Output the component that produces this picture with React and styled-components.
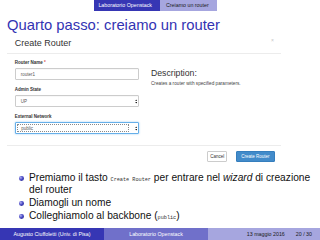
import styled, { createGlobalStyle } from 'styled-components';

const GlobalStyle = createGlobalStyle`
  html, body {
    margin: 0;
    padding: 0;
    background: #ffffff;
  }
  body {
    width: 320px;
    height: 240px;
    overflow: hidden;
    font-family: 'Liberation Sans', Arial, sans-serif;
  }
`;

const Slide = styled.div`
  display: flex;
  flex-direction: column;
  width: 320px;
  height: 240px;
  background: #ffffff;
  overflow: hidden;
`;

const HeadLine = styled.div`
  display: flex;
  height: 11px;
  font-size: 5.3px;
  line-height: 11px;
`;

const HeadHalf = styled.div`
  flex: 1;
  display: flex;
  justify-content: ${(p) => (p.$side === 'left' ? 'flex-end' : 'flex-start')};
`;

const HeadTab = styled.div`
  background: ${(p) => (p.$dark ? '#3636b4' : '#a6a6df')};
  color: ${(p) => (p.$dark ? '#ffffff' : '#1a1a1a')};
  padding: ${(p) => (p.$dark ? '0 8px 0 4px' : '0 8px 0 6px')};
  white-space: nowrap;
`;

const FrameTitle = styled.h1`
  margin: 0;
  padding: 6.3px 0 0 7px;
  font-size: 14.8px;
  font-weight: normal;
  line-height: 17px;
  color: #3333b3;
`;

const Shot = styled.div`
  margin-left: 7px;
  width: 274px;
  background: #ffffff;
`;

const ModalHeader = styled.div`
  display: flex;
  justify-content: space-between;
  align-items: flex-start;
  height: 19.7px;
  box-sizing: border-box;
  padding: 3.7px 7px 0 7.7px;
  border-bottom: 1px solid #ececec;
`;

const ModalTitle = styled.div`
  font-size: 9px;
  line-height: 10px;
  color: #333333;
`;

const Close = styled.div`
  font-size: 5px;
  line-height: 5px;
  color: #c4c4c4;
`;

const ModalBody = styled.div`
  display: flex;
  height: 92px;
  box-sizing: border-box;
  padding: 6px 0 0 7.7px;
  border-bottom: 1px solid #ececec;
`;

const FormCol = styled.div`
  display: flex;
  flex-direction: column;
  width: 124px;
`;

const Field = styled.div`
  display: flex;
  flex-direction: column;
  margin-bottom: 7px;
`;

const Label = styled.div`
  font-size: 4.5px;
  font-weight: bold;
  line-height: 6px;
  color: #333333;
  margin-bottom: 2.5px;
`;

const Req = styled.span`
  color: #d9534f;
`;

const Control = styled.div`
  display: flex;
  align-items: center;
  justify-content: space-between;
  height: 11.5px;
  box-sizing: border-box;
  padding: 0 0.5px 0 5px;
  border: 1px solid ${(p) => (p.$focus ? '#66afe9' : '#cccccc')};
  border-radius: 1px;
  box-shadow: ${(p) =>
    p.$focus ? '0 0 2px rgba(102, 175, 233, 0.7)' : 'inset 0 0.5px 0.5px rgba(0,0,0,0.06)'};
  font-size: 4.5px;
  color: #555555;
  background: #ffffff;
`;

const FocusRing = styled.div`
  display: flex;
  align-items: center;
  width: 112px;
  height: 8px;
  margin-left: -3.5px;
  padding-left: 3px;
  box-sizing: border-box;
  border: 1px dotted #8a8a8a;
`;

const DescCol = styled.div`
  display: flex;
  flex-direction: column;
  margin-left: 12.3px;
  padding-top: 8.3px;
`;

const DescTitle = styled.div`
  font-size: 8.7px;
  line-height: 10px;
  color: #333333;
`;

const DescText = styled.div`
  margin-top: 2.7px;
  font-size: 4.7px;
  line-height: 6px;
  color: #444444;
`;

const ModalFooter = styled.div`
  display: flex;
  justify-content: flex-end;
  gap: 8.7px;
  padding: 5px 6.3px 5px 0;
`;

const Button = styled.div`
  display: flex;
  align-items: center;
  justify-content: center;
  width: ${(p) => p.$w}px;
  height: 11.3px;
  box-sizing: border-box;
  border-radius: 1px;
  border: 1px solid ${(p) => (p.$primary ? '#357ebd' : '#cccccc')};
  background: ${(p) => (p.$primary ? '#428bca' : '#ffffff')};
  color: ${(p) => (p.$primary ? '#ffffff' : '#333333')};
  font-size: 4.5px;
`;

const List = styled.ul`
  list-style: none;
  margin: 4.3px 0 0 0;
  padding: 0;
  font-size: 10.2px;
  font-weight: 400;
  line-height: 12.7px;
  color: #111111;
`;

const Item = styled.li`
  display: flex;
  align-items: flex-start;
`;

const Ball = styled.span`
  flex-shrink: 0;
  width: 4.8px;
  height: 4.8px;
  margin: 4.4px 0 0 18.8px;
  border-radius: 50%;
  background: radial-gradient(circle at 35% 35%, #b4b4f0 0%, #4545c4 45%, #24247a 100%);
`;

const ItemText = styled.span`
  margin-left: 5.4px;
  width: 286px;
`;

const Mono = styled.span`
  font-family: 'Liberation Mono', 'DejaVu Sans Mono', monospace;
  font-size: 5.2px;
  line-height: 1;
  color: #333333;
`;

const Footer = styled.div`
  display: flex;
  margin-top: auto;
  height: 12px;
  font-size: 5.3px;
  line-height: 12px;
`;

const FootCell = styled.div`
  flex: 1;
  display: flex;
  justify-content: ${(p) => p.$justify || 'center'};
  gap: 11px;
  padding-right: ${(p) => (p.$justify ? '8px' : '0')};
  background: ${(p) => p.$bg};
  color: ${(p) => p.$fg};
  white-space: nowrap;
`;

const SelectArrow = () => (
  <svg width="2.4" height="5" viewBox="0 0 2.4 5">
    <path d="M0.2 2 L1.2 0.4 L2.2 2 Z" fill="#222" />
    <path d="M0.2 3 L1.2 4.6 L2.2 3 Z" fill="#222" />
  </svg>
);

const App = () => {
  return (
    <>
      <GlobalStyle />
      <Slide>
        <HeadLine>
          <HeadHalf $side="left">
            <HeadTab $dark>Laboratorio Openstack</HeadTab>
          </HeadHalf>
          <HeadHalf $side="right">
            <HeadTab>Creiamo un router</HeadTab>
          </HeadHalf>
        </HeadLine>

        <FrameTitle>Quarto passo: creiamo un router</FrameTitle>

        <Shot>
          <ModalHeader>
            <ModalTitle>Create Router</ModalTitle>
            <Close>×</Close>
          </ModalHeader>
          <ModalBody>
            <FormCol>
              <Field>
                <Label>
                  Router Name <Req>*</Req>
                </Label>
                <Control>router1</Control>
              </Field>
              <Field>
                <Label>Admin State</Label>
                <Control>
                  UP
                  <SelectArrow />
                </Control>
              </Field>
              <Field>
                <Label>External Network</Label>
                <Control $focus>
                  <FocusRing>public</FocusRing>
                  <SelectArrow />
                </Control>
              </Field>
            </FormCol>
            <DescCol>
              <DescTitle>Description:</DescTitle>
              <DescText>Creates a router with specified parameters.</DescText>
            </DescCol>
          </ModalBody>
          <ModalFooter>
            <Button $w={20}>Cancel</Button>
            <Button $w={38.7} $primary>
              Create Router
            </Button>
          </ModalFooter>
        </Shot>

        <List>
          <Item>
            <Ball />
            <ItemText>
              Premiamo il tasto <Mono>Create Router</Mono> per entrare nel <i>wizard</i> di
              creazione del router
            </ItemText>
          </Item>
          <Item>
            <Ball />
            <ItemText>Diamogli un nome</ItemText>
          </Item>
          <Item>
            <Ball />
            <ItemText>
              Colleghiamolo al backbone (<Mono>public</Mono>)
            </ItemText>
          </Item>
        </List>

        <Footer>
          <FootCell $bg="#3636b4" $fg="#ffffff">
            Augusto Ciuffoletti (Univ. di Pisa)
          </FootCell>
          <FootCell $bg="#7070ca" $fg="#ffffff">
            Laboratorio Openstack
          </FootCell>
          <FootCell $bg="#a6a6df" $fg="#1a1a1a" $justify="flex-end">
            <span>13 maggio 2016</span>
            <span>20 / 30</span>
          </FootCell>
        </Footer>
      </Slide>
    </>
  );
};

export default App;
